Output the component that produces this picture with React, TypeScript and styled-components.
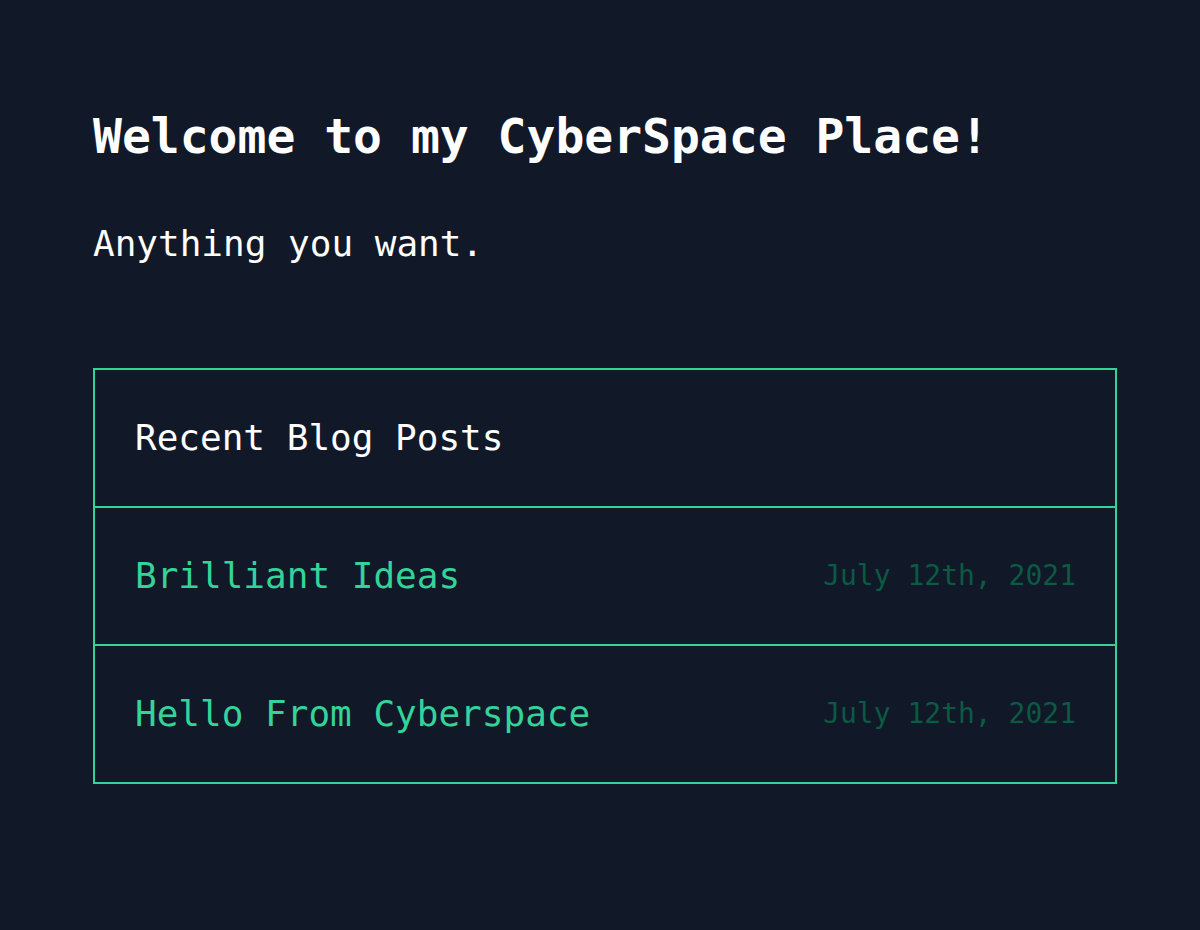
import React from 'react';
import styled, { createGlobalStyle } from 'styled-components';

const GlobalStyle = createGlobalStyle`
  html, body {
    margin: 0;
    padding: 0;
    background: #111827;
  }
  body {
    font-family: "DejaVu Sans Mono", "Liberation Mono", monospace;
    color: #ffffff;
  }
`;

const Page = styled.main`
  min-height: 930px;
  box-sizing: border-box;
  padding: 112px 0 0 93px;
`;

const Title = styled.h1`
  margin: 0;
  font-size: 48px;
  line-height: 48px;
  font-weight: 700;
`;

const Subtitle = styled.p`
  margin: 66px 0 0;
  font-size: 36px;
  line-height: 36px;
`;

const PostList = styled.section`
  margin-top: 106px;
  width: 1024px;
  box-sizing: border-box;
  border: 2px solid #34d399;
`;

const Row = styled.div<{ $first?: boolean }>`
  display: flex;
  align-items: center;
  justify-content: space-between;
  height: ${p => (p.$first ? '136px' : '138px')};
  padding: 0 39px 0 40px;
  box-sizing: border-box;
  border-top: ${p => (p.$first ? 'none' : '2px solid #34d399')};
`;

const Heading = styled.h2`
  margin: 0;
  font-size: 36px;
  line-height: 36px;
  font-weight: 400;
  color: #ffffff;
`;

const PostLink = styled.a`
  font-size: 36px;
  line-height: 36px;
  color: #34d399;
  text-decoration: none;
`;

const PostDate = styled.span`
  font-size: 28px;
  line-height: 28px;
  color: #0b5a44;
`;

const posts = [
  { title: 'Brilliant Ideas', date: 'July 12th, 2021' },
  { title: 'Hello From Cyberspace', date: 'July 12th, 2021' },
];

export default function App() {
  return (
    <>
      <GlobalStyle />
      <Page>
        <Title>Welcome to my CyberSpace Place!</Title>
        <Subtitle>Anything you want.</Subtitle>
        <PostList>
          <Row $first>
            <Heading>Recent Blog Posts</Heading>
          </Row>
          {posts.map(post => (
            <Row key={post.title}>
              <PostLink href="#">{post.title}</PostLink>
              <PostDate>{post.date}</PostDate>
            </Row>
          ))}
        </PostList>
      </Page>
    </>
  );
}
